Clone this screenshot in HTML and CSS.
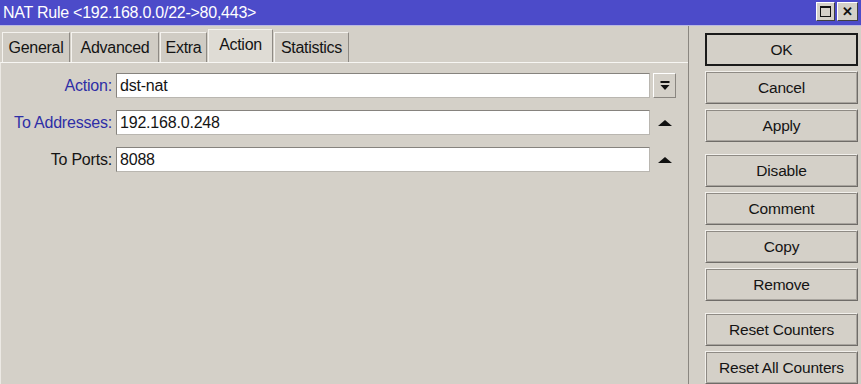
FILE: index.html
```html
<!DOCTYPE html>
<html lang="en">
<head>
  <meta charset="UTF-8">
  <title>NAT Rule</title>
  <link rel="stylesheet" href="styles.css">
</head>
<body>
  <div class="window">
    <div class="titlebar">
      <span class="title">NAT Rule &lt;192.168.0.0/22-&gt;80,443&gt;</span>
      <div class="win-btns">
        <span class="win-btn"><span class="max-box"></span></span>
        <span class="win-btn close">&#10005;</span>
      </div>
    </div>
    <div class="content">
      <div class="main">
        <div class="tabs">
          <div class="tab tab-general">General</div>
          <div class="tab tab-advanced">Advanced</div>
          <div class="tab tab-extra">Extra</div>
          <div class="tab tab-action active">Action</div>
          <div class="tab tab-stats">Statistics</div>
        </div>
        <div class="panel">
          <div class="field">
            <label class="label blue">Action:</label>
            <div class="input">dst-nat</div>
            <div class="ctrl">
              <span class="drop-btn">
                <svg width="10" height="10" viewBox="0 0 10 10"><rect x="0.5" y="0" width="9" height="2" fill="#111"/><path d="M0.5 4 H9.5 L5 9 Z" fill="#111"/></svg>
              </span>
            </div>
          </div>
          <div class="field">
            <label class="label blue">To Addresses:</label>
            <div class="input">192.168.0.248</div>
            <div class="ctrl"><span class="up-arrow"></span></div>
          </div>
          <div class="field">
            <label class="label">To Ports:</label>
            <div class="input">8088</div>
            <div class="ctrl"><span class="up-arrow"></span></div>
          </div>
        </div>
      </div>
      <div class="side">
        <button class="btn default">OK</button>
        <button class="btn">Cancel</button>
        <button class="btn">Apply</button>
        <button class="btn group">Disable</button>
        <button class="btn">Comment</button>
        <button class="btn">Copy</button>
        <button class="btn">Remove</button>
        <button class="btn group">Reset Counters</button>
        <button class="btn">Reset All Counters</button>
      </div>
    </div>
  </div>
</body>
</html>
```
FILE: styles.css
```css
html, body {
  margin: 0;
  height: 100%;
  overflow: hidden;
}
body {
  font-family: "Liberation Sans", Arial, sans-serif;
  background-color: #d4d0c8;
  color: #141414;
}
.window {
  display: flex;
  flex-direction: column;
  height: 384px;
}
.titlebar {
  height: 25px;
  background-color: #4c4bc9;
  border-bottom: 1px solid #b9b8e2;
  display: flex;
  align-items: center;
  justify-content: space-between;
}
.title {
  color: #ffffff;
  font-size: 16px;
  letter-spacing: -0.25px;
  padding-left: 3px;
}
.win-btns {
  display: flex;
  gap: 2px;
  padding-right: 3px;
  align-self: flex-start;
  padding-top: 2px;
}
.win-btn {
  width: 17px;
  height: 17px;
  background-color: #d4d0c8;
  border: 1px solid;
  border-color: #ffffff #404040 #404040 #ffffff;
  display: flex;
  align-items: center;
  justify-content: center;
  font-size: 13px;
  font-weight: bold;
  color: #111;
}
.win-btn.close {
  width: 19px;
}
.max-box {
  width: 9px;
  height: 8px;
  border: 1px solid #111;
  border-top-width: 2px;
}
.content {
  flex: 1;
  display: flex;
}
.main {
  width: 688px;
  display: flex;
  flex-direction: column;
  border-right: 1px solid #8a8680;
}
.tabs {
  height: 36px;
  display: flex;
  align-items: flex-end;
  gap: 1px;
  padding-left: 2px;
}
.tab {
  height: 30px;
  box-sizing: border-box;
  background-color: #d0ccc4;
  border: 1px solid;
  border-color: #f4f2ee #8e8a84 transparent #f4f2ee;
  border-bottom: none;
  font-size: 16px;
  letter-spacing: -0.3px;
  display: flex;
  align-items: center;
  justify-content: center;
}
.tab.active {
  height: 34px;
  margin-bottom: -1px;
  background-color: #dfdcd5;
  padding-bottom: 3px;
}
.tab-general { width: 68px; }
.tab-advanced { width: 88px; }
.tab-extra { width: 47px; }
.tab-action { width: 65px; }
.tab-stats { width: 75px; }
.panel {
  flex: 1;
  border-top: 1px solid #f7f6f3;
  border-left: 1px solid #ece9e4;
  padding-top: 10px;
  display: flex;
  flex-direction: column;
  gap: 12px;
}
.field {
  display: flex;
  align-items: center;
  height: 25px;
}
.label {
  width: 111px;
  text-align: right;
  font-size: 16px;
  letter-spacing: -0.2px;
  margin-right: 4px;
}
.label.blue {
  color: #2e2ea6;
}
.input {
  width: 529px;
  height: 23px;
  background-color: #ffffff;
  border: 1px solid;
  border-color: #86837e #b9b6b0 #b9b6b0 #86837e;
  font-size: 16px;
  letter-spacing: -0.2px;
  line-height: 23px;
  padding-left: 3px;
}
.ctrl {
  width: 23px;
  height: 25px;
  margin-left: 3px;
  display: flex;
  align-items: center;
  justify-content: center;
}
.drop-btn {
  width: 21px;
  height: 23px;
  border: 1px solid;
  border-color: #ffffff #8a8680 #8a8680 #ffffff;
  display: flex;
  align-items: center;
  justify-content: center;
}
.up-arrow {
  width: 0;
  height: 0;
  border-left: 7px solid transparent;
  border-right: 7px solid transparent;
  border-bottom: 6px solid #111;
}
.side {
  padding: 7px 0 0 16px;
  display: flex;
  flex-direction: column;
  gap: 5px;
}
.btn {
  width: 153px;
  height: 33px;
  flex-shrink: 0;
  background-color: #d4d0c8;
  border: 1px solid;
  border-color: #f2f0ec #6f6c68 #6f6c68 #f2f0ec;
  box-shadow: inset -1px -1px 0 #a8a49e, inset 1px 1px 0 #8e8a84;
  font-family: "Liberation Sans", Arial, sans-serif;
  font-size: 15.5px;
  letter-spacing: -0.2px;
  color: #141414;
  padding: 0;
}
.btn.default {
  border: 2px solid #1a1a1a;
  box-shadow: none;
}
.btn.group {
  margin-top: 7px;
}
```
